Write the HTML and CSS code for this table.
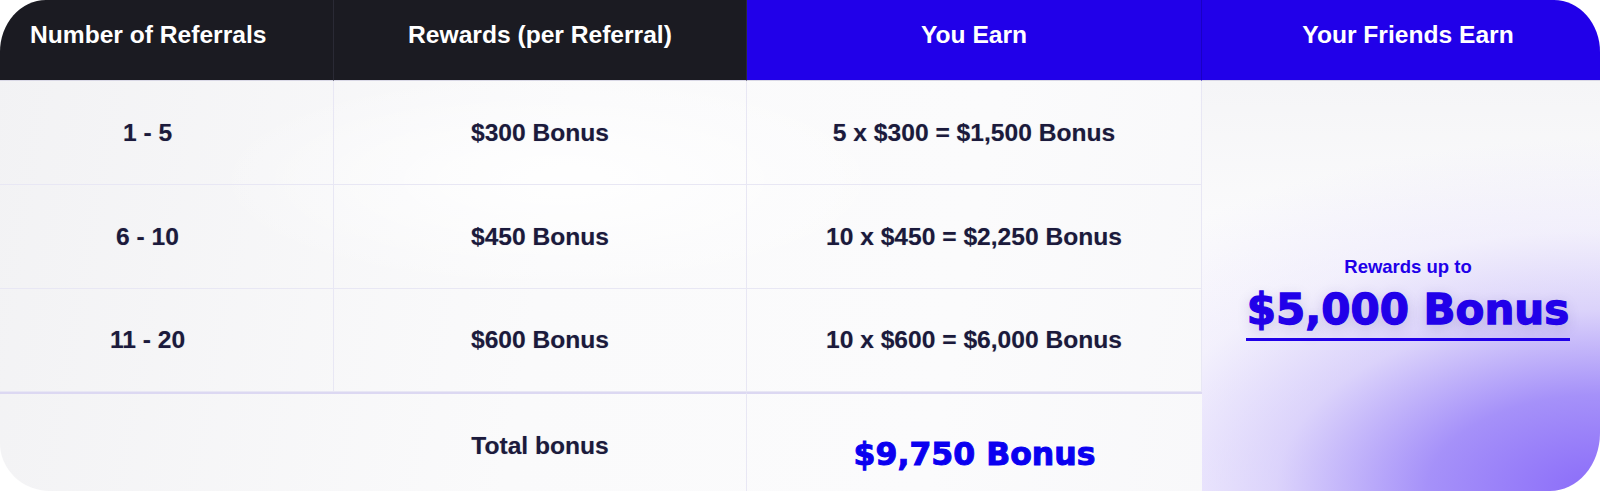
FILE: index.html
```html
<!DOCTYPE html>
<html lang="en">
<head>
<meta charset="utf-8">
<title>Referral Rewards</title>
<link rel="stylesheet" href="styles.css">
</head>
<body>
<div class="table">
  <div class="th th-dark th-first">Number of Referrals</div>
  <div class="th th-dark">Rewards (per Referral)</div>
  <div class="th th-blue">You Earn</div>
  <div class="th th-blue th-last">Your Friends Earn</div>

  <div class="td td-first">1 - 5</div>
  <div class="td">$300 Bonus</div>
  <div class="td">5 x $300 = $1,500 Bonus</div>

  <div class="friends">
    <div class="friends-label">Rewards up to</div>
    <div class="friends-value">$5,000 Bonus</div>
  </div>

  <div class="td td-first">6 - 10</div>
  <div class="td">$450 Bonus</div>
  <div class="td">10 x $450 = $2,250 Bonus</div>

  <div class="td td-first">11 - 20</div>
  <div class="td">$600 Bonus</div>
  <div class="td">10 x $600 = $6,000 Bonus</div>

  <div class="total total-empty"></div>
  <div class="total total-label">Total bonus</div>
  <div class="total total-value">$9,750 Bonus</div>
</div>
</body>
</html>
```

FILE: styles.css
```css
* { box-sizing: border-box; }

html, body {
  margin: 0;
  padding: 0;
  background: #ffffff;
}

.table {
  width: 1600px;
  height: 491px;
  display: grid;
  grid-template-columns: 334px 413px 455px 1fr;
  grid-template-rows: 81px 104px 104px 103px 1fr;
  border-radius: 46px 46px 50px 50px / 52px 52px 58px 48px;
  overflow: hidden;
  background:
    radial-gradient(ellipse 500px 160px at 560px 180px, rgba(255,255,255,0.9), rgba(255,255,255,0) 70%),
    linear-gradient(100deg, #f2f2f4 0%, #fafafb 35%, #fbfbfc 60%, #f4f4f7 100%);
  font-family: "Liberation Sans", Arial, sans-serif;
  font-weight: 700;
  font-size: 24.6px;
  color: #1b1a3c;
}

.th {
  display: flex;
  justify-content: center;
  align-items: flex-start;
  padding-top: 21px;
  color: #ffffff;
  border-bottom: 1px solid #d9d8e6;
}

.th-dark {
  background: #1b1b22;
  border-right: 1px solid #2a2a35;
}

.th-blue {
  background: #2100e9;
  border-right: 1px solid #1a00c4;
}

.th-first {
  justify-content: flex-start;
  padding-left: 30px;
}

.th-last {
  border-right: none;
  padding-left: 14px;
}

.td {
  display: flex;
  justify-content: center;
  align-items: center;
  border-right: 1px solid #e8e7f4;
  border-bottom: 1px solid #e8e7f4;
  text-shadow: 0 0 1px rgba(27,26,60,0.3);
}

.td-first {
  padding-right: 38px;
}

.friends {
  grid-column: 4;
  grid-row: 2 / 6;
  display: flex;
  flex-direction: column;
  align-items: center;
  justify-content: flex-start;
  padding-top: 175px;
  padding-left: 14px;
  background:
    radial-gradient(ellipse 720px 400px at 100% 100%, #8a6bf9 0%, rgba(150,126,248,0.85) 24%, rgba(196,182,249,0.6) 45%, rgba(225,218,251,0.35) 65%, rgba(255,255,255,0) 88%),
    linear-gradient(180deg, #f5f5f7 0%, #fbfbfc 40%, #ffffff 100%);
}

.friends-label {
  color: #2100e9;
  font-size: 18.5px;
  line-height: 22px;
}

.friends-value {
  margin-top: 8px;
  font-family: "DejaVu Sans", Verdana, sans-serif;
  font-weight: 700;
  font-size: 42px;
  line-height: 48px;
  color: #2100e9;
  -webkit-text-stroke: 1.3px #2100e9;
  padding: 0 1px 4px;
  border-bottom: 3px solid #2100e9;
  text-shadow: 0 4px 14px rgba(70, 50, 130, 0.22);
}

.total {
  display: flex;
  justify-content: center;
  align-items: center;
  border-top: 2px solid #dcd8f2;
}

.total-empty {
  border-right: none;
}

.total-label {
  border-right: 1px solid #e8e7f4;
  padding-top: 6px;
  text-shadow: 0 0 1px rgba(27,26,60,0.3);
}

.total-value {
  padding-top: 22px;
  font-family: "DejaVu Sans", Verdana, sans-serif;
  font-size: 31.5px;
  color: #0a00f0;
  -webkit-text-stroke: 1px #0a00f0;
}
```
